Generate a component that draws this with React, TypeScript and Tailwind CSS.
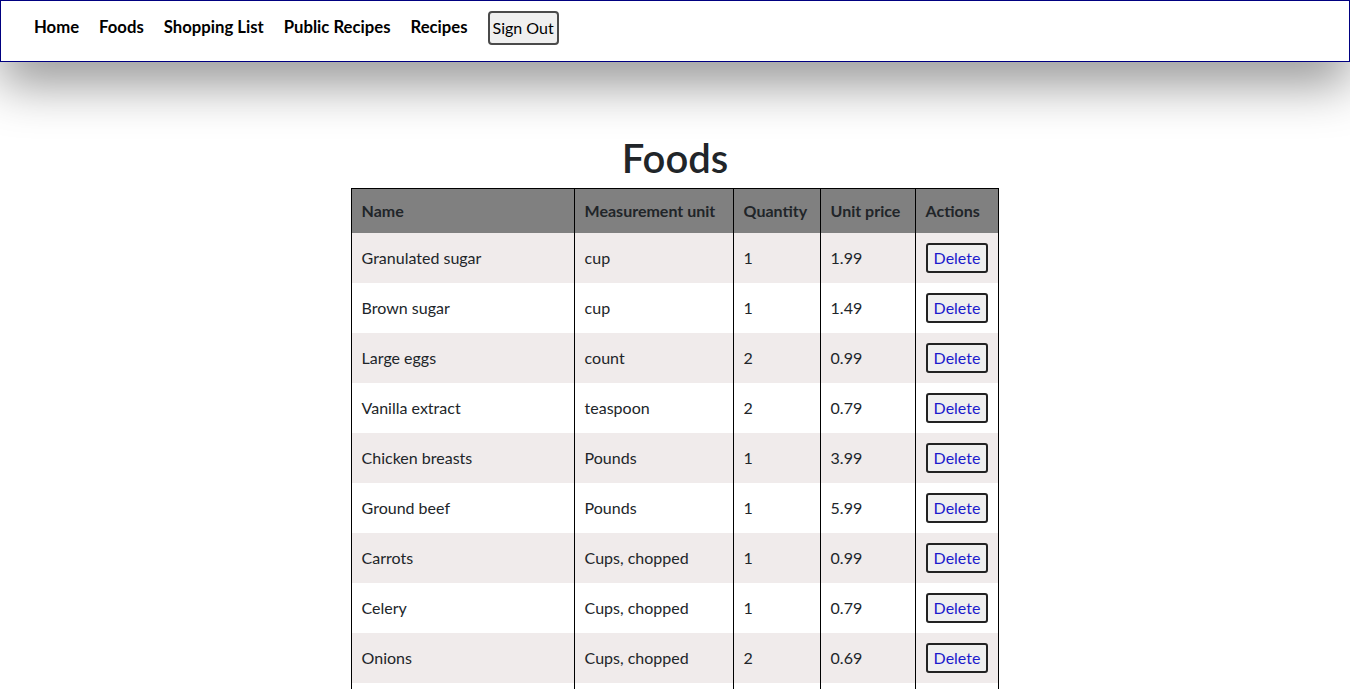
import React from 'react';

interface Food {
  name: string;
  unit: string;
  quantity: number;
  price: string;
}

const foods: Food[] = [
  { name: 'Granulated sugar', unit: 'cup', quantity: 1, price: '1.99' },
  { name: 'Brown sugar', unit: 'cup', quantity: 1, price: '1.49' },
  { name: 'Large eggs', unit: 'count', quantity: 2, price: '0.99' },
  { name: 'Vanilla extract', unit: 'teaspoon', quantity: 2, price: '0.79' },
  { name: 'Chicken breasts', unit: 'Pounds', quantity: 1, price: '3.99' },
  { name: 'Ground beef', unit: 'Pounds', quantity: 1, price: '5.99' },
  { name: 'Carrots', unit: 'Cups, chopped', quantity: 1, price: '0.99' },
  { name: 'Celery', unit: 'Cups, chopped', quantity: 1, price: '0.79' },
  { name: 'Onions', unit: 'Cups, chopped', quantity: 2, price: '0.69' },
  { name: 'Garlic', unit: 'cloves', quantity: 3, price: '0.25' },
  { name: 'Butter', unit: 'tablespoon', quantity: 2, price: '0.50' },
];

const links = ['Home', 'Foods', 'Shopping List', 'Public Recipes', 'Recipes'];

const NavBar: React.FC = () => (
  <nav className="relative z-10 h-[62px] border border-[#000080] bg-white flex items-center pl-[33px] pb-[6px] gap-[20px] shadow-[0_22px_50px_rgba(0,0,0,0.42)]">
    {links.map((l) => (
      <a key={l} href="#" className="font-bold text-black text-[16.7px]">
        {l}
      </a>
    ))}
    <button className="h-[34px] px-[3px] border-2 border-[#4a4a4a] rounded-[4px] bg-[#efefef] text-black text-[16px] font-normal">
      Sign Out
    </button>
  </nav>
);

const FoodsTable: React.FC = () => (
  <table className="border-collapse text-[16px] text-[#212529] border border-black">
    <thead>
      <tr className="h-[44px] bg-[#808080] text-left font-bold">
        <th className="w-[223px] px-[10px] border-x border-black">Name</th>
        <th className="w-[159px] px-[10px] border-x border-black">Measurement unit</th>
        <th className="w-[87px] px-[10px] border-x border-black">Quantity</th>
        <th className="w-[95px] px-[10px] border-x border-black">Unit price</th>
        <th className="w-[81px] px-[10px] border-x border-black">Actions</th>
      </tr>
    </thead>
    <tbody>
      {foods.map((f, i) => (
        <tr key={i} className={`h-[50px] ${i % 2 === 0 ? 'bg-[#f0ebeb]' : 'bg-white'}`}>
          <td className="px-[10px] border-x border-black">{f.name}</td>
          <td className="px-[10px] border-x border-black">{f.unit}</td>
          <td className="px-[10px] border-x border-black">{f.quantity}</td>
          <td className="px-[10px] border-x border-black">{f.price}</td>
          <td className="px-[10px] border-x border-black">
            <button className="h-[30px] px-[6px] border-2 border-[#222] rounded-[3px] bg-[#efefef] text-[#1a1acc]">
              Delete
            </button>
          </td>
        </tr>
      ))}
    </tbody>
  </table>
);

export default function App() {
  return (
    <div className="min-h-screen bg-white font-['Lato','Open_Sans',sans-serif]">
      <NavBar />
      <main className="flex flex-col items-center pt-[74px]">
        <h1 className="text-[40px] leading-[44px] font-semibold text-[#212529] mb-[8px]">Foods</h1>
        <FoodsTable />
      </main>
    </div>
  );
}
